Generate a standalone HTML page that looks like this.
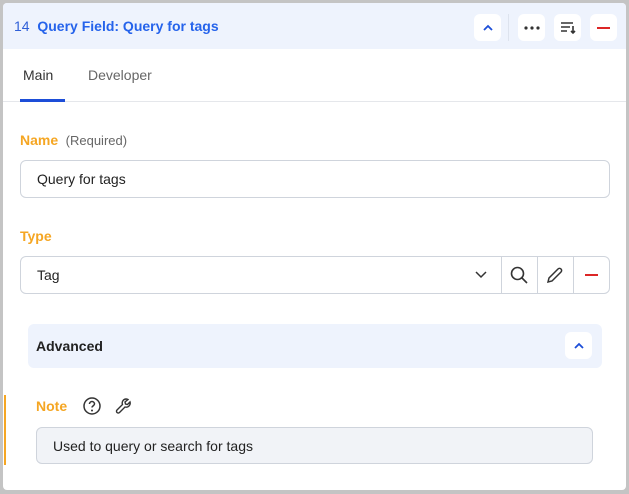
<!DOCTYPE html><html><head><style>
*{box-sizing:border-box;margin:0;padding:0}
body{width:629px;height:494px;background:#c4c4c4;font-family:"Liberation Sans",sans-serif;position:relative;overflow:hidden}
.card{position:absolute;left:3px;top:3px;width:623px;height:487px;background:#fff;border-radius:4px;overflow:hidden}
.hdr{position:absolute;left:0;top:0;width:623px;height:46px;background:#eef3fd}
.a{position:absolute}
.btn{position:absolute;width:27px;height:27px;background:#fff;border-radius:6px;top:11px;display:flex;align-items:center;justify-content:center}
.lbl{position:absolute;color:#f5a623;font-weight:bold;font-size:14px}
.inp{position:absolute;border:1px solid #cfd4dc;border-radius:6px;background:#fff;font-size:14px;color:#222;padding-left:16px;display:flex;align-items:center}
</style></head><body>
<div class="card">
<div class="hdr">
<div class="a" style="left:11px;top:15px;font-size:14px;color:#2f5fd8">14 &nbsp;<b style="color:#2563eb">Query Field: Query for tags</b></div>
<div class="btn" style="left:471px"><svg width="14" height="14" viewBox="0 0 14 14"><path d="M3 9l4-4 4 4" stroke="#1d4ed8" stroke-width="1.8" fill="none"/></svg></div>
<div class="a" style="left:505px;top:11px;width:1px;height:27px;background:#dde3ee"></div>
<div class="btn" style="left:515px"><svg width="16" height="4"><circle cx="2" cy="2" r="1.6" fill="#333"/><circle cx="8" cy="2" r="1.6" fill="#333"/><circle cx="14" cy="2" r="1.6" fill="#333"/></svg></div>
<div class="btn" style="left:551px"><svg width="16" height="14" viewBox="0 0 16 14"><path d="M1 2h12M1 6h9M1 10h6M13 5v7M11 10l2 2 2-2" stroke="#333" stroke-width="1.6" fill="none"/></svg></div>
<div class="btn" style="left:587px"><div style="width:13px;height:2px;background:#dc2626"></div></div>
</div>
<div class="a" style="left:20px;top:64px;font-size:14px;color:#333">Main</div>
<div class="a" style="left:85px;top:64px;font-size:14px;color:#666">Developer</div>
<div class="a" style="left:0;top:98px;width:623px;height:1px;background:#e5e7eb"></div>
<div class="a" style="left:17px;top:96px;width:45px;height:3px;background:#1d4ed8"></div>
<div class="lbl" style="left:17px;top:129px">Name <span style="font-weight:normal;color:#666;font-size:13px">&nbsp;(Required)</span></div>
<div class="inp" style="left:17px;top:157px;width:590px;height:38px">Query for tags</div>
<div class="lbl" style="left:17px;top:225px">Type</div>
<div class="inp" style="left:17px;top:253px;width:590px;height:38px">Tag
<svg class="a" style="left:453px;top:12px" width="14" height="12"><path d="M2 3l5 5 5-5" stroke="#333" stroke-width="1.5" fill="none"/></svg>
<div class="a" style="left:480px;top:0;width:1px;height:36px;background:#cfd4dc"></div>
<svg class="a" style="left:488px;top:8px" width="20" height="20"><circle cx="8.5" cy="8.5" r="6" stroke="#333" stroke-width="1.6" fill="none"/><path d="M13 13l5 5" stroke="#333" stroke-width="1.6"/></svg>
<div class="a" style="left:516px;top:0;width:1px;height:36px;background:#cfd4dc"></div>
<svg class="a" style="left:524px;top:8px" width="20" height="20"><path d="M3 17l1-4 9-9a2 2 0 013 3l-9 9z" stroke="#333" stroke-width="1.5" fill="none"/></svg>
<div class="a" style="left:552px;top:0;width:1px;height:36px;background:#cfd4dc"></div>
<div class="a" style="left:564px;top:17px;width:13px;height:2px;background:#dc2626"></div>
</div>
<div class="a" style="left:25px;top:321px;width:574px;height:44px;background:#eef3fd;border-radius:6px">
<div class="a" style="left:8px;top:14px;font-size:14px;font-weight:bold;color:#222">Advanced</div>
<div class="a" style="left:537px;top:8px;width:27px;height:27px;background:#fff;border-radius:6px;display:flex;align-items:center;justify-content:center"><svg width="14" height="14"><path d="M3 9l4-4 4 4" stroke="#1d4ed8" stroke-width="1.8" fill="none"/></svg></div>
</div>
<div class="a" style="left:1px;top:392px;width:2px;height:70px;background:#f5a623"></div>
<div class="lbl" style="left:33px;top:395px">Note</div>
<svg class="a" style="left:79px;top:393px" width="20" height="20"><circle cx="10" cy="10" r="8" stroke="#333" stroke-width="1.5" fill="none"/><path d="M7.5 8a2.5 2.5 0 115 0c0 1.5-2.5 2-2.5 3.5" stroke="#333" stroke-width="1.5" fill="none"/><circle cx="10" cy="14.5" r="1" fill="#333"/></svg>
<svg class="a" style="left:111px;top:393px" width="20" height="20"><path d="M12 3a4 4 0 00-3.5 5.5L3 14a1.5 1.5 0 002.5 2.5L11 11a4 4 0 005-5l-2.5 2.5-2-.5-.5-2L14 3.5A4 4 0 0012 3z" stroke="#333" stroke-width="1.4" fill="none"/></svg>
<div class="inp" style="left:33px;top:424px;width:557px;height:37px;background:#f1f3f7">Used to query or search for tags</div>
</div>
</body></html>
